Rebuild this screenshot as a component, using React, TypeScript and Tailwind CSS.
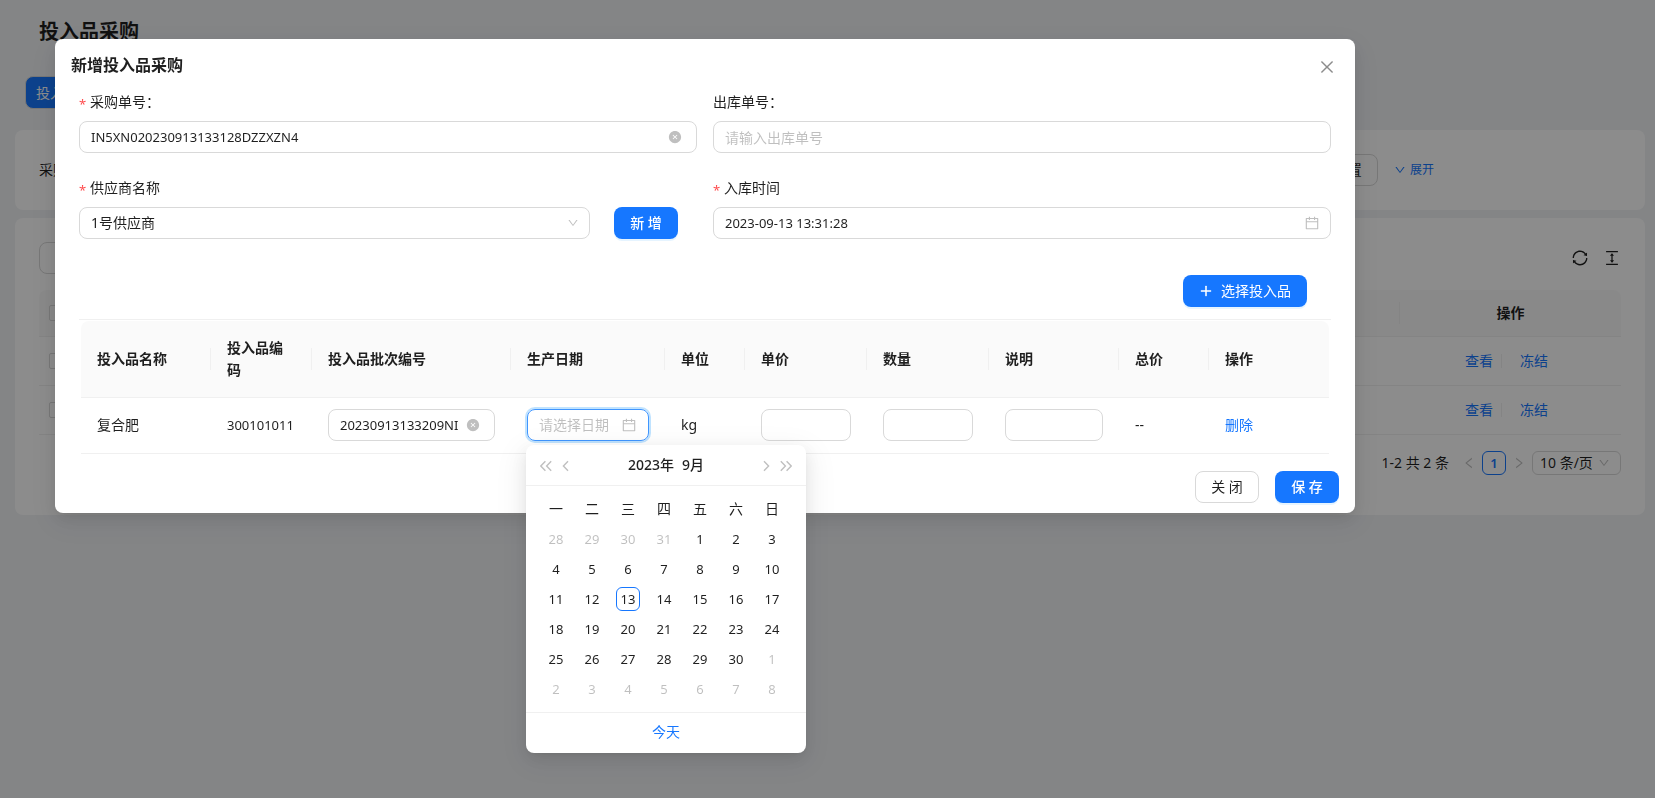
import React from "react";
import {
    AiFillCloseCircle,
    AiOutlineCalendar,
    AiOutlineClose,
    AiOutlineColumnHeight,
    AiOutlineDown,
    AiOutlineLeft,
    AiOutlinePlus,
    AiOutlineRight,
    AiOutlineSync,
} from "react-icons/ai";

const weekDays = ["一", "二", "三", "四", "五", "六", "日"];

const weeks = [
    [28, 29, 30, 31, 1, 2, 3],
    [4, 5, 6, 7, 8, 9, 10],
    [11, 12, 13, 14, 15, 16, 17],
    [18, 19, 20, 21, 22, 23, 24],
    [25, 26, 27, 28, 29, 30, 1],
    [2, 3, 4, 5, 6, 7, 8],
];

const columns = [
    { title: "投入品名称", width: "w-[130px]" },
    { title: "投入品编码", width: "w-[101px]" },
    { title: "投入品批次编号", width: "w-[199px]" },
    { title: "生产日期", width: "w-[154px]" },
    { title: "单位", width: "w-[80px]" },
    { title: "单价", width: "w-[122px]" },
    { title: "数量", width: "w-[122px]" },
    { title: "说明", width: "w-[130px]" },
    { title: "总价", width: "w-[90px]" },
    { title: "操作", width: "w-[120px]" },
];

const field =
    "block w-full h-8 px-[11px] rounded-lg border border-[#d9d9d9] bg-white text-black/88 placeholder:text-black/25 outline-none";
const cell = "h-14 px-4 pt-[11px] pb-3 border-b border-[#f0f0f0]";
const primary = "h-8 rounded-lg bg-[#1677ff] text-white shadow-[0_2px_0_rgba(5,145,255,0.1)]";

function isOtherMonth(week: number, day: number) {
    return (week === 0 && day > 7) || (week > 3 && day < 15);
}

function Chevrons({ double = false, right = false }) {
    return (
        <svg
            className={right ? "h-3 w-3 rotate-180" : "h-3 w-3"}
            viewBox="0 0 12 12"
            fill="none"
            stroke="currentColor"
            strokeWidth="1.4"
        >
            {double ? (
                <path d="M5.4 1.2 0.8 6l4.6 4.8M11.2 1.2 6.6 6l4.6 4.8" />
            ) : (
                <path d="M8 1.2 3.4 6l4.6 4.8" />
            )}
        </svg>
    );
}

function Label({ id, text, required = false }: { id: string; text: string; required?: boolean }) {
    return (
        <label htmlFor={id} className="flex items-center h-[22px] mb-2">
            {required && <span className="w-[11px] h-4 text-[13px] text-[#ff4d4f] leading-5">*</span>}
            {text}
        </label>
    );
}

function DatePanel() {
    return (
        <div className="absolute top-full -left-px z-20 mt-1 w-[280px] rounded-lg bg-white shadow-[0_6px_16px_rgba(0,0,0,0.08),0_3px_6px_-4px_rgba(0,0,0,0.12),0_9px_28px_8px_rgba(0,0,0,0.05)]">
            <div className="flex items-center h-[41px] px-3.5 border-b border-[#f0f0f0]">
                <div className="flex gap-2 pt-0.5 text-black/25">
                    <button aria-label="上一年"><Chevrons double /></button>
                    <button aria-label="上个月"><Chevrons /></button>
                </div>
                <div className="flex flex-1 justify-center gap-2 font-medium">
                    <button>2023年</button>
                    <button>9月</button>
                </div>
                <div className="flex gap-2 pt-0.5 text-black/25">
                    <button aria-label="下个月"><Chevrons right /></button>
                    <button aria-label="下一年"><Chevrons double right /></button>
                </div>
            </div>
            <div className="px-3 py-2">
                <table className="w-[252px] table-fixed text-center">
                    <thead>
                        <tr>
                            {weekDays.map((day) => (
                                <th key={day} className="h-[30px] p-0 font-normal">{day}</th>
                            ))}
                        </tr>
                    </thead>
                    <tbody className="text-[13px]">
                        {weeks.map((week, i) => (
                            <tr key={i}>
                                {week.map((day) => (
                                    <td key={day} className={isOtherMonth(i, day) ? "h-[30px] p-0 text-black/25" : "h-[30px] p-0"}>
                                        <span
                                            className={
                                                i === 2 && day === 13
                                                    ? "inline-block size-6 rounded-md border border-[#1677ff] leading-[22px] align-middle"
                                                    : "inline-block size-6 leading-6 align-middle"
                                            }
                                        >
                                            {day}
                                        </span>
                                    </td>
                                ))}
                            </tr>
                        ))}
                    </tbody>
                </table>
            </div>
            <div className="h-[41px] border-t border-[#f0f0f0] text-center leading-[38px]">
                <a href="#" className="text-[#1677ff]">今天</a>
            </div>
        </div>
    );
}

function PurchaseList() {
    return (
        <main className="min-h-screen px-[15px] pb-8 pr-2.5">
            <h1 className="px-6 pt-4 h-[76px] text-xl leading-8 font-semibold">投入品采购</h1>
            <div className="h-[54px] pl-2.5">
                <button className="h-[33px] w-[90px] px-2.5 rounded-lg border border-[#d9d9d9] bg-[#1677ff] text-left text-white">投入品</button>
            </div>

            <section className="flex items-center h-20 px-6 rounded-lg bg-white">
                <label htmlFor="search">采购单号：</label>
                <input id="search" className="flex-1 h-8 rounded-lg border border-[#d9d9d9]" />
                <button className="ml-4 mr-4 h-8 w-16 rounded-lg border border-[#d9d9d9]">重 置</button>
                <a href="#" className="flex items-center gap-1 mr-[187px] text-xs text-[#1677ff]">
                    <AiOutlineDown />
                    展开
                </a>
            </section>

            <section className="mt-2 px-6 pt-6 pb-10 rounded-lg bg-white">
                <div className="flex items-start justify-between h-12">
                    <button className="h-8 w-24 rounded-lg border border-[#d9d9d9]">导 出</button>
                    <div className="flex gap-3.5 pt-[7px] text-lg">
                        <button aria-label="刷新"><AiOutlineSync /></button>
                        <button aria-label="密度"><AiOutlineColumnHeight /></button>
                    </div>
                </div>
                <table className="w-full table-fixed border-separate border-spacing-0">
                    <thead>
                        <tr className="bg-[#fafafa]">
                            <th className="h-[47px] w-14 pl-2.5 rounded-tl-lg border-b border-[#f0f0f0] text-left">
                                <input type="checkbox" aria-label="全选" className="block size-4 appearance-none rounded-xs border border-[#d9d9d9]" />
                            </th>
                            <th className="border-b border-[#f0f0f0]">
                                <div className="h-[22px] border-r border-[#f0f0f0]"></div>
                            </th>
                            <th className="w-[221px] rounded-tr-lg border-b border-[#f0f0f0] font-semibold">操作</th>
                        </tr>
                    </thead>
                    <tbody>
                        {[1, 2].map((row) => (
                            <tr key={row}>
                                <td className="h-[49px] pl-2.5 border-b border-[#f0f0f0]">
                                    <input type="checkbox" aria-label="选择" className="block size-4 appearance-none rounded-xs border border-[#d9d9d9]" />
                                </td>
                                <td className="border-b border-[#f0f0f0]"></td>
                                <td className="border-b border-[#f0f0f0]">
                                    <div className="flex items-center justify-center pr-2 text-[#1677ff]">
                                        <a href="#">查看</a>
                                        <span className="ml-2 mr-[18px] h-3.5 border-r border-[#f0f0f0]"></span>
                                        <a href="#">冻结</a>
                                    </div>
                                </td>
                            </tr>
                        ))}
                    </tbody>
                </table>
                <div className="flex items-center justify-end mt-4">
                    <span>1-2 共 2 条</span>
                    <button aria-label="上一页" className="flex w-[33px] justify-center pl-1.5 text-sm text-black/25"><AiOutlineLeft /></button>
                    <button className="size-6 rounded-md border border-[#1677ff] text-[#1677ff] text-[13px] font-semibold">1</button>
                    <button aria-label="下一页" className="flex w-[26px] justify-center text-sm text-black/25"><AiOutlineRight /></button>
                    <div className="relative">
                        <select aria-label="每页条数" className="block h-6 w-[89px] px-[7px] appearance-none rounded-md border border-[#d9d9d9]">
                            <option>10 条/页</option>
                        </select>
                        <AiOutlineDown className="absolute right-[11px] top-1.5 text-xs text-black/25 pointer-events-none" />
                    </div>
                </div>
            </section>
        </main>
    );
}

function App() {
    return (
        <div className="min-h-screen bg-[#f0f2f5] text-sm leading-[22px] text-black/88 font-['Noto_Sans','Noto_Sans_CJK_SC',sans-serif]">
            <PurchaseList />

            <div className="fixed inset-0 z-10 bg-black/45 pt-[39px] pl-[55px] pr-[300px]">
                <div
                    role="dialog"
                    aria-labelledby="title"
                    className="rounded-lg bg-white px-4 pb-2.5 pt-3.5 shadow-[0_6px_16px_rgba(0,0,0,0.08),0_3px_6px_-4px_rgba(0,0,0,0.12),0_9px_28px_8px_rgba(0,0,0,0.05)]"
                >
                    <div className="flex items-center justify-between h-6 mb-3.5">
                        <h2 id="title" className="text-base font-semibold">新增投入品采购</h2>
                        <button aria-label="关闭" className="mr-[3px] pt-1 text-lg text-black/45"><AiOutlineClose /></button>
                    </div>

                    <form className="px-2">
                        <div className="grid grid-cols-2 gap-x-4 gap-y-6">
                            <div>
                                <Label id="order" text="采购单号：" required />
                                <div className="relative">
                                    <input id="order" className={`${field} text-[13px]`} defaultValue="IN5XN020230913133128DZZXZN4" />
                                    <AiFillCloseCircle className="absolute right-[15px] top-[9px] text-black/25" />
                                </div>
                            </div>
                            <div>
                                <Label id="outOrder" text="出库单号：" />
                                <input id="outOrder" className={field} placeholder="请输入出库单号" />
                            </div>
                            <div>
                                <Label id="supplier" text="供应商名称" required />
                                <div className="flex gap-6 pr-[19px]">
                                    <div className="relative flex-1">
                                        <select id="supplier" className={`${field} appearance-none`}>
                                            <option>1号供应商</option>
                                        </select>
                                        <AiOutlineDown className="absolute right-[11px] top-2.5 text-xs text-black/25 pointer-events-none" />
                                    </div>
                                    <button type="button" className={`${primary} w-16 font-medium`}>新 增</button>
                                </div>
                            </div>
                            <div>
                                <Label id="inTime" text="入库时间" required />
                                <div className="relative">
                                    <input id="inTime" className={`${field} text-[13px]`} defaultValue="2023-09-13 13:31:28" />
                                    <AiOutlineCalendar className="absolute right-[11px] top-2 text-base text-black/25" />
                                </div>
                            </div>
                        </div>

                        <div className="flex justify-end pr-6 mt-9 pb-3 border-b border-[#f0f0f0]">
                            <button type="button" className={`${primary} flex items-center gap-2 px-4`}>
                                <AiOutlinePlus className="stroke-[40]" />
                                选择投入品
                            </button>
                        </div>

                        <div className="px-0.5 pt-px">
                            <table className="w-full table-fixed border-separate border-spacing-0 text-left">
                                <thead>
                                    <tr className="bg-[#fafafa]">
                                        {columns.map((column, i) => (
                                            <th
                                                key={column.title}
                                                className={`${column.width} relative p-4 border-b border-[#f0f0f0] font-semibold first:rounded-tl-lg last:rounded-tr-lg`}
                                            >
                                                {column.title}
                                                {i < columns.length - 1 && (
                                                    <span className="absolute right-0 top-[27px] h-[22px] w-px bg-[#f0f0f0]"></span>
                                                )}
                                            </th>
                                        ))}
                                    </tr>
                                </thead>
                                <tbody>
                                    <tr>
                                        <td className={cell}>复合肥</td>
                                        <td className={`${cell} text-[13px]`}>300101011</td>
                                        <td className={cell}>
                                            <div className="flex items-center gap-2 h-8 px-[11px] rounded-lg border border-[#d9d9d9]">
                                                <input aria-label="投入品批次编号" className="flex-1 min-w-0 text-[13px] outline-none" defaultValue="20230913133209NI" />
                                                <AiFillCloseCircle className="mr-[3px] text-sm text-black/25" />
                                            </div>
                                        </td>
                                        <td className={cell}>
                                            <div className="relative">
                                                <div className="flex items-center h-8 px-[11px] rounded-lg border border-[#4096ff] shadow-[0_0_0_2px_rgba(5,145,255,0.25)]">
                                                    <input aria-label="生产日期" className="flex-1 min-w-0 outline-none placeholder:text-black/25" placeholder="请选择日期" />
                                                    <AiOutlineCalendar className="text-base text-black/25" />
                                                </div>
                                                <DatePanel />
                                            </div>
                                        </td>
                                        <td className={cell}>kg</td>
                                        <td className={cell}><input aria-label="单价" className={field} /></td>
                                        <td className={cell}><input aria-label="数量" className={field} /></td>
                                        <td className={cell}><input aria-label="说明" className={field} /></td>
                                        <td className={cell}>--</td>
                                        <td className={cell}><a href="#" className="text-[#1677ff]">删除</a></td>
                                    </tr>
                                </tbody>
                            </table>
                        </div>
                    </form>

                    <div className="flex justify-end gap-4 mt-[17px]">
                        <button className="h-8 w-16 rounded-lg border border-[#d9d9d9] bg-white">关 闭</button>
                        <button className={`${primary} w-16 font-medium`}>保 存</button>
                    </div>
                </div>
            </div>
        </div>
    );
}

export default App;
